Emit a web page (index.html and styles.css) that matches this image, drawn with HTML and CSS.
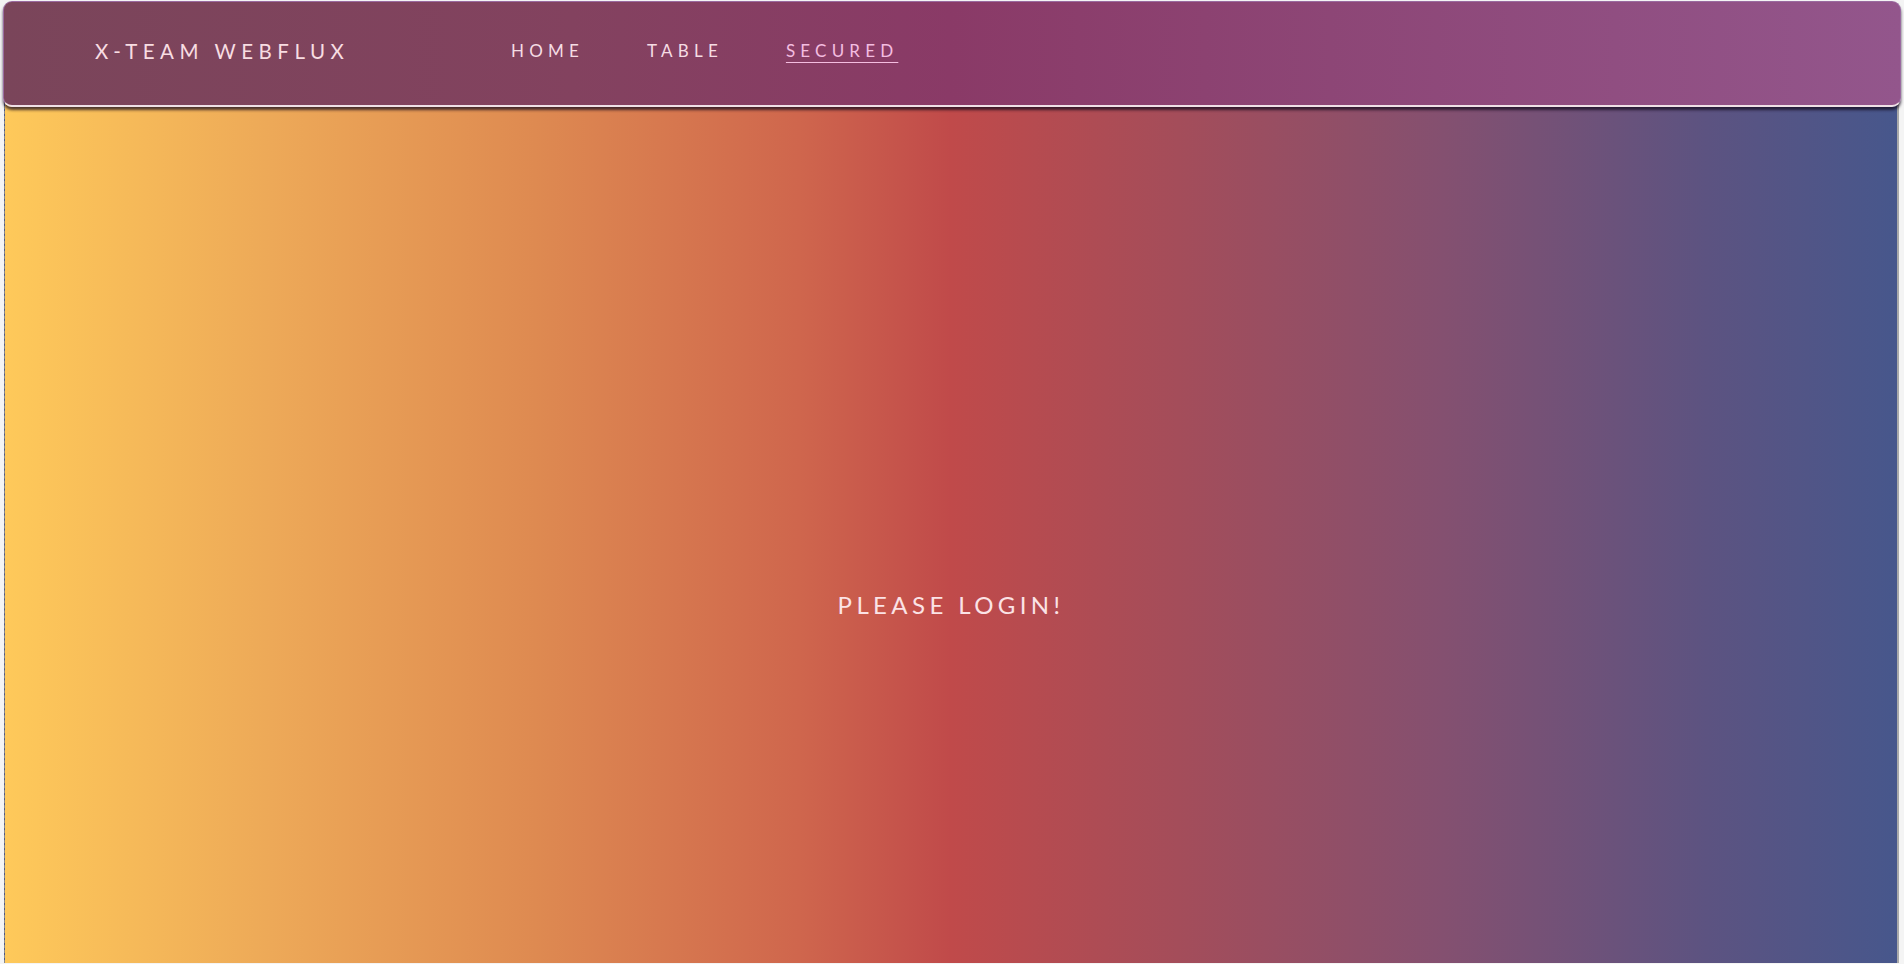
FILE: index.html
```html
<!DOCTYPE html>
<html lang="en">
<head>
  <meta charset="UTF-8">
  <title>X-Team WebFlux</title>
  <link rel="stylesheet" href="styles.css">
</head>
<body>
  <header class="topbar">
    <div class="brand">X-TEAM WEBFLUX</div>
    <nav class="nav">
      <a href="#">HOME</a>
      <a href="#">TABLE</a>
      <a href="#" class="active">SECURED</a>
    </nav>
  </header>

  <main class="content">
    <p class="message">PLEASE LOGIN!</p>
  </main>
</body>
</html>
```

FILE: styles.css
```css
html, body {
  height: 100%;
}

body {
  margin: 0;
  background: #f4f4f4;
  font-family: Lato, 'Open Sans', sans-serif;
  color: #f8dde2;
  overflow: hidden;
}

.topbar {
  position: relative;
  z-index: 2;
  display: flex;
  align-items: center;
  height: 106px;
  margin: 1px 3px 0 3px;
  padding: 0 0 6px 91px;
  box-sizing: border-box;
  border: 1px solid #9a6aa0;
  border-bottom: 2px solid #efe0e6;
  border-radius: 9px;
  background: linear-gradient(to right, #7a455a 0%, #83425f 30%, #8a3a67 50%, #8d4676 70%, #93568c 100%);
  box-shadow: 0 3px 3px rgba(20, 10, 30, 0.75);
}

.brand {
  font-size: 20.5px;
  letter-spacing: 5.5px;
  width: 416px;
}

.nav {
  display: flex;
  gap: 63px;
}

.nav a {
  color: #f5dce4;
  text-decoration: none;
  font-size: 17px;
  font-weight: 400;
  letter-spacing: 5.2px;
}

.nav a.active {
  color: #f4bde0;
  text-decoration: underline;
  text-underline-offset: 5px;
}

.content {
  display: flex;
  justify-content: center;
  height: calc(100% - 102px);
  margin: -6px 5px 0 4px;
  border-left: 1px dashed #8a8a8a;
  border-right: 2px solid #a9a9a9;
  background: linear-gradient(to right, #fec95a 0%, #eda958 14%, #de8a51 28%, #cf664d 42%, #c04a4a 50%, #a44d5a 62%, #845070 76%, #5c5381 90%, #47578c 100%);
}

.message {
  margin: 489px 0 0;
  font-size: 24px;
  letter-spacing: 4.4px;
  font-weight: 400;
  color: #fbe3e6;
}
```
